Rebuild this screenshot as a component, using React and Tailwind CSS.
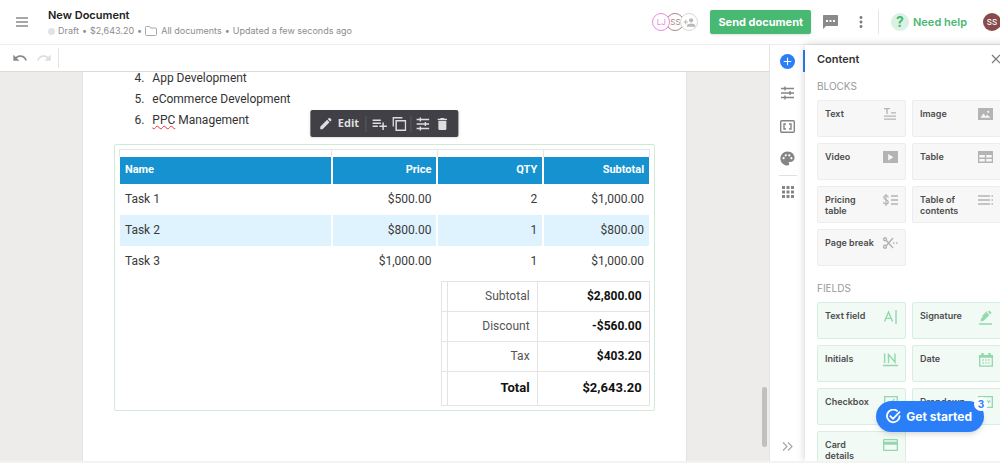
import {
  MdAdd,
  MdDelete,
  MdEdit,
  MdMoreVert,
  MdPalette,
  MdPersonAdd,
  MdPlaylistAdd,
  MdRedo,
  MdUndo,
} from 'react-icons/md'

const services = [
  { id: 4, name: 'App Development' },
  { id: 5, name: 'eCommerce Development' },
  { id: 6, name: 'PPC Management', typo: 'PPC' },
]

const tasks = [
  { name: 'Task 1', price: '$500.00', qty: 2, subtotal: '$1,000.00' },
  { name: 'Task 2', price: '$800.00', qty: 1, subtotal: '$800.00' },
  { name: 'Task 3', price: '$1,000.00', qty: 1, subtotal: '$1,000.00' },
]

const totals = [
  { label: 'Subtotal', value: '$2,800.00' },
  { label: 'Discount', value: '-$560.00' },
  { label: 'Tax', value: '$403.20' },
]

function TextIcon() {
  return (
    <svg width="15" height="12" viewBox="0 0 15 12" fill="currentColor">
      <path d="M1 0h6v1.3H4.7V6H3.3V1.3H1zM8 4.2h5v1.3H8zM1 7.5h12v1.3H1zM1 10.5h12v1.3H1z" />
    </svg>
  )
}

function VideoIcon() {
  return (
    <svg width="15" height="12" viewBox="0 0 15 12">
      <rect width="15" height="12" fill="currentColor" />
      <path d="M5.2 3v6.4L10.4 6.2z" fill="#f7f7f7" />
    </svg>
  )
}

function ImageIcon() {
  return (
    <svg width="15" height="12" viewBox="0 0 15 12">
      <rect width="15" height="12" fill="currentColor" />
      <path d="M2.5 9.8l3-4.2 2.2 2.8 1.4-1.6 3.4 3z" fill="#f7f7f7" />
      <circle cx="10.2" cy="3.8" r="1.1" fill="#f7f7f7" />
    </svg>
  )
}

function TableIcon() {
  return (
    <svg width="15" height="12" viewBox="0 0 15 12">
      <rect width="15" height="12" fill="currentColor" />
      <path d="M1.3 4h5.5v2.6H1.3zM8.2 4h5.5v2.6H8.2zM1.3 8h5.5v2.6H1.3zM8.2 8h5.5v2.6H8.2z" fill="#f7f7f7" />
    </svg>
  )
}

function PricingIcon() {
  return (
    <svg width="15" height="12" viewBox="0 0 15 12" fill="none" stroke="currentColor" strokeWidth="1.2">
      <path d="M5.2 3.4C5.2 2.3 4.3 1.7 3 1.7S.8 2.3.8 3.6s.9 1.7 2.200 2.100 2.200.9 2.200 2.200-.9 2-2.200 2S.6 9.200.6 8M3 0v12" />
      <path d="M8 2h7M8 6h7M8 10h7" strokeWidth="1.6" />
    </svg>
  )
}

function ContentsIcon() {
  return (
    <svg width="15" height="12" viewBox="0 0 15 12" fill="none" stroke="currentColor" strokeWidth="1.6">
      <path d="M0 2h12M0 6h12M0 10h12M13.4 2h1.6M13.4 6h1.6M13.4 10h1.6" />
    </svg>
  )
}

function ScissorsIcon() {
  return (
    <svg width="15" height="12" viewBox="0 0 15 12" fill="none" stroke="currentColor" strokeWidth="1.4">
      <circle cx="2" cy="2.2" r="1.5" />
      <circle cx="2" cy="9.8" r="1.5" />
      <path d="M3.2 3.2L10 11M3.2 8.8L10 1M10 6h1.5M13 6h1.5" />
    </svg>
  )
}

function TextFieldIcon() {
  return (
    <svg width="15" height="14" viewBox="0 0 15 14" fill="none" stroke="currentColor" strokeWidth="1.4">
      <path d="M1.5 11.5L5.5 2l4 9.5M3 8.4h5M13 0v14" />
    </svg>
  )
}

function SignatureIcon() {
  return (
    <svg width="15" height="15" viewBox="0 0 15 15" fill="currentColor">
      <path d="M2.5 11.5l.7-3L9 2.7l2.4 2.3-5.8 5.8zM9.8 1.9L11.2.5l2.4 2.3-1.4 1.4zM4 6l4.6-4.8.8.7L4.8 6.7zM1 13.3h13v1.4H1z" />
    </svg>
  )
}

function InitialsIcon() {
  return (
    <svg width="15" height="14" viewBox="0 0 15 14" fill="none" stroke="currentColor" strokeWidth="1.4">
      <path d="M1.6.5v9.5M5.5 10V1.5l6.5 7.5V.5M0 12.5h15" />
    </svg>
  )
}

function DateIcon() {
  return (
    <svg width="14" height="14" viewBox="0 0 14 14" fill="none" stroke="currentColor" strokeWidth="1.3">
      <path d="M.7 2.7h12.6v10.5H.7z" />
      <path d="M0 3.5h14M3.5 0v3M10.5 0v3" strokeWidth="2.4" />
      <path d="M3.5 7h7M3.5 9.8h7" strokeDasharray="1.4 1.4" />
    </svg>
  )
}

function CheckboxIcon() {
  return (
    <svg width="14" height="12" viewBox="0 0 14 12" fill="none" stroke="currentColor" strokeWidth="1.3">
      <path d="M.7.7h12.6v10.6H.7zM3.5 6l2.5 2.5L10.5 3" />
    </svg>
  )
}

function DropdownIcon() {
  return (
    <svg width="15" height="12" viewBox="0 0 15 12" fill="none" stroke="currentColor" strokeWidth="1.3">
      <path d="M.7.7h13.6v10.6H.7zM9 4.5l1.5 2 1.5-2" />
    </svg>
  )
}

function CardIcon() {
  return (
    <svg width="15" height="12" viewBox="0 0 15 12" fill="currentColor">
      <path fillRule="evenodd" d="M1 0h13a1 1 0 0 1 1 1v10a1 1 0 0 1-1 1H1a1 1 0 0 1-1-1V1a1 1 0 0 1 1-1zM1.3 1.3v1.4h12.4V1.3zM1.3 5.7v5h12.4v-5z" />
    </svg>
  )
}

function SlidersIcon() {
  return (
    <svg width="13" height="14" viewBox="0 0 13 14" fill="none" stroke="currentColor" strokeWidth="1.4">
      <path d="M0 2.5h13M0 7h13M0 11.5h13M4 .5v4M9 5v4M4 9.5v4" />
    </svg>
  )
}

function CopyIcon() {
  return (
    <svg width="14" height="14" viewBox="0 0 14 14" fill="none" stroke="currentColor" strokeWidth="1.5">
      <path d="M.8 9.5V.8h9.2M3.8 3.8h9.4v9.4H3.8z" />
    </svg>
  )
}

function CommentIcon() {
  return (
    <svg width="15" height="14" viewBox="0 0 15 14">
      <path d="M0 .8A.8.8 0 0 1 .8 0h13.4a.8.8 0 0 1 .8.8v9.4a.8.8 0 0 1-.8.8H3l-3 3z" fill="currentColor" />
      <path d="M3 5h2v2H3zM6.5 5h2v2h-2zM10 5h2v2h-2z" fill="#fff" />
    </svg>
  )
}

function VariablesIcon() {
  return (
    <svg width="15" height="13" viewBox="0 0 15 13" fill="none" stroke="currentColor" strokeWidth="1.4">
      <rect x=".7" y=".7" width="13.6" height="11.6" rx="1" />
      <path d="M6 4H4v5h2M9 4h2v5H9" />
    </svg>
  )
}

function GridIcon() {
  return (
    <svg width="12" height="12" viewBox="0 0 12 12" fill="none" stroke="currentColor" strokeWidth="3">
      <path d="M0 1.5h12M0 6h12M0 10.5h12" strokeDasharray="3 1.5" />
    </svg>
  )
}

function CheckCircleIcon() {
  return (
    <svg width="15" height="15" viewBox="0 0 15 15" fill="none" stroke="currentColor" strokeWidth="1.8">
      <path d="M11.6 2.3A6.3 6.3 0 1 0 13.6 6.5M3.8 6.6l3.2 3.2L14 2.6" />
    </svg>
  )
}

const blocks = [
  { label: 'Text', icon: TextIcon },
  { label: 'Image', icon: ImageIcon },
  { label: 'Video', icon: VideoIcon },
  { label: 'Table', icon: TableIcon },
  { label: 'Pricing table', icon: PricingIcon },
  { label: 'Table of contents', icon: ContentsIcon },
  { label: 'Page break', icon: ScissorsIcon },
]

const fields = [
  { label: 'Text field', icon: TextFieldIcon },
  { label: 'Signature', icon: SignatureIcon },
  { label: 'Initials', icon: InitialsIcon },
  { label: 'Date', icon: DateIcon },
  { label: 'Checkbox', icon: CheckboxIcon },
  { label: 'Dropdown', icon: DropdownIcon },
  { label: 'Card details', icon: CardIcon },
]

function Header() {
  return (
    <header className="flex h-[45px] flex-none items-center border-b border-[#ececec] bg-white pr-3 pl-4">
      <button aria-label="Menu" className="mr-5 text-[#8a8a8a]">
        <svg width="12" height="10" viewBox="0 0 12 10" fill="none" stroke="currentColor" strokeWidth="1.4">
          <path d="M0 1h12M0 5h12M0 9h12" />
        </svg>
      </button>
      <div className="flex-1 pt-[2px]">
        <h1 className="text-[11px] leading-4 font-semibold text-[#222]">New Document</h1>
        <div className="flex items-center gap-[3px] text-[9px] leading-4 text-[#8c8c8c]">
          <span className="size-[7px] rounded-full bg-[#e4e2e2]" />
          <span>Draft</span>
          <span>•</span>
          <span>$2,643.20</span>
          <span>•</span>
          <a href="#documents" className="flex items-center gap-1">
            <svg width="12" height="10" viewBox="0 0 12 10" fill="none" stroke="#a8a8a8">
              <path d="M1.5.5h3l1 1.5h5a1 1 0 0 1 1 1v5.5a1 1 0 0 1-1 1h-9a1 1 0 0 1-1-1v-7a1 1 0 0 1 1-1z" />
            </svg>
            All documents
          </a>
          <span>•</span>
          <span>Updated a few seconds ago</span>
        </div>
      </div>
      <div className="mr-3 flex -space-x-1 text-[8px]">
        <span className="z-10 flex size-[18px] items-center justify-center rounded-full border border-[#ee8ade] bg-white text-[#ee8ade]">LJ</span>
        <span className="flex size-[18px] items-center justify-center rounded-full border border-[#a98686] bg-white text-[#a98686]">SS</span>
        <button aria-label="Add recipient" className="flex size-[18px] items-center justify-center rounded-full border border-[#d8d8d8] bg-white text-[#b9b9b9]">
          <MdPersonAdd size={13} />
        </button>
      </div>
      <button className="h-6 rounded-xs bg-[#47b972] px-2 text-[11px] font-bold text-white shadow-sm">Send document</button>
      <button aria-label="Comments" className="ml-3 text-[#8a8a8a]">
        <CommentIcon />
      </button>
      <button aria-label="More" className="ml-[14px] text-[#808080]">
        <MdMoreVert size={18} />
      </button>
      <span className="mr-3 ml-2 h-6 w-px bg-[#e6e6e6]" />
      <button className="flex items-center gap-1 text-[11px] font-semibold text-[#47b972]">
        <span className="flex size-[18px] items-center justify-center rounded-full bg-[#daf1e3] text-sm font-bold">?</span>
        Need help
      </button>
      <span className="ml-4 flex size-[18px] items-center justify-center rounded-full bg-[#874b4e] text-[8px] font-medium text-white">SS</span>
    </header>
  )
}

function BlockToolbar() {
  return (
    <div className="absolute bottom-full left-1/2 mb-2 flex h-[27px] -translate-x-1/2 items-center rounded-xs bg-[#414047] px-2 text-[#dedede] shadow">
      <button className="mr-[6px] flex items-center gap-1 font-['Open_Sans',sans-serif] text-[11px] font-bold">
        <MdEdit size={15} />
        Edit
      </button>
      <span className="h-4 w-px bg-[#5b5a60]" />
      <button aria-label="Add row" className="mx-1">
        <MdPlaylistAdd size={18} />
      </button>
      <button aria-label="Duplicate" className="mr-1">
        <CopyIcon />
      </button>
      <span className="h-4 w-px bg-[#5b5a60]" />
      <button aria-label="Settings" className="mx-[5px]">
        <SlidersIcon />
      </button>
      <button aria-label="Delete">
        <MdDelete size={16} />
      </button>
    </div>
  )
}

function PricingTable() {
  return (
    <section className="relative rounded-xs border border-[#cfebd8] p-1">
      <BlockToolbar />
      <table className="w-full table-fixed text-[12px] text-[#3a3a3a]">
        <colgroup>
          <col className="w-2/5" />
          <col className="w-1/5" />
          <col className="w-1/5" />
          <col className="w-1/5" />
        </colgroup>
        <thead>
          <tr className="h-[7px]">
            <td className="border border-b-0 border-[#e6e6e6]" />
            <td className="border border-b-0 border-[#e6e6e6]" />
            <td className="border border-b-0 border-[#e6e6e6]" />
            <td className="border border-b-0 border-[#e6e6e6]" />
          </tr>
          <tr className="h-[27px] bg-[#1592cf] text-[11px] text-white">
            <th className="border-r-2 border-white px-[5px] text-left font-bold">Name</th>
            <th className="border-r-2 border-white px-[5px] text-right font-bold">Price</th>
            <th className="border-r-2 border-white px-[5px] text-right font-bold">QTY</th>
            <th className="px-[5px] text-right font-bold">Subtotal</th>
          </tr>
        </thead>
        <tbody>
          {tasks.map((task) => (
            <tr key={task.name} className="h-[31px] even:bg-[#def3fe]">
              <td className="border-r-2 border-white px-[5px]">{task.name}</td>
              <td className="border-r-2 border-white px-[5px] text-right">{task.price}</td>
              <td className="border-r-2 border-white px-[5px] text-right">{task.qty}</td>
              <td className="px-[5px] text-right">{task.subtotal}</td>
            </tr>
          ))}
        </tbody>
      </table>
      <table className="mt-1 ml-auto w-[209px] table-fixed text-right text-[12px]">
        <colgroup>
          <col className="w-[6px]" />
          <col className="w-[90px]" />
          <col />
        </colgroup>
        <tbody>
          {totals.map((row) => (
            <tr key={row.label} className="h-[30px]">
              <td className="border border-[#e4e4e4]" />
              <th className="border border-[#e4e4e4] px-[7px] text-right font-normal text-[#555]">{row.label}</th>
              <td className="border border-[#e4e4e4] px-[7px] font-bold text-[#111]">{row.value}</td>
            </tr>
          ))}
          <tr className="h-[34px] text-[13px] font-bold text-[#111]">
            <td className="border border-[#e4e4e4]" />
            <th className="border border-[#e4e4e4] px-[7px] text-right">Total</th>
            <td className="border border-[#e4e4e4] px-[7px]">$2,643.20</td>
          </tr>
        </tbody>
      </table>
    </section>
  )
}

function Editor() {
  return (
    <main className="flex min-w-0 flex-1 flex-col">
      <div className="flex h-[27px] flex-none items-center border-b border-[#dcdcdc] bg-white pl-3">
        <button aria-label="Undo" className="text-[#8a8a8a]">
          <MdUndo size={16} />
        </button>
        <button aria-label="Redo" className="mr-[6px] ml-2 text-[#dedede]">
          <MdRedo size={16} />
        </button>
        <span className="h-5 w-px bg-[#e4e4e4]" />
      </div>
      <div className="relative min-h-0 flex-1 overflow-hidden bg-[#edecea]">
        <div className="mx-auto h-full w-11/14 border-x border-[#e3e2e0] bg-white px-[31px] font-['Roboto',sans-serif]">
          <ol className="mb-[18px] space-y-[9px] pl-5 text-[12px] leading-3 text-[#333]">
            {services.map((service) => (
              <li key={service.id} className="flex gap-2">
                <span>{service.id}.</span>
                {service.typo ? (
                  <span>
                    <span className="underline decoration-red-500 decoration-wavy decoration-1">{service.typo}</span>
                    {service.name.slice(service.typo.length)}
                  </span>
                ) : (
                  <span>{service.name}</span>
                )}
              </li>
            ))}
          </ol>
          <PricingTable />
        </div>
        <div className="absolute right-[2px] bottom-[14px] h-[60px] w-[5px] rounded-full bg-[#c1c0bf]" />
      </div>
    </main>
  )
}

function Rail() {
  return (
    <nav className="flex w-9 flex-none flex-col items-center border-l border-[#e4e4e4] bg-white text-[#858585]">
      <button aria-label="Content" className="mt-[5px] flex h-[22px] w-full items-center justify-center border-x-2 border-l-transparent border-r-[#2a7ff9]">
        <span className="rounded-full bg-[#2a7ff9] p-px text-white">
          <MdAdd size={13} />
        </span>
      </button>
      <button aria-label="Settings" className="mt-[14px]">
        <SlidersIcon />
      </button>
      <button aria-label="Variables" className="mt-5">
        <VariablesIcon />
      </button>
      <button aria-label="Design" className="mt-[17px]">
        <MdPalette size={17} />
      </button>
      <span className="mt-2 h-px w-[18px] bg-[#e0e0e0]" />
      <button aria-label="Apps" className="mt-[10px]">
        <GridIcon />
      </button>
      <button aria-label="Collapse" className="mt-auto mb-[10px]">
        <svg width="11" height="9" viewBox="0 0 11 9" fill="none" stroke="#a5a5a5" strokeWidth="1.2">
          <path d="M1 .5l4 4-4 4M6 .5l4 4-4 4" />
        </svg>
      </button>
    </nav>
  )
}

function Tile({ label, icon: Icon, green }) {
  const colors = green ? 'border-[#d6f0df] bg-[#f1faf5]' : 'border-[#ededed] bg-[#f7f7f7]'
  return (
    <button className={`flex h-[37px] items-start justify-between rounded-xs border px-[7px] pt-[7px] text-left ${colors}`}>
      <span className="w-[52px] text-[9px] leading-[11px] font-semibold text-[#4d4d4d]">{label}</span>
      <span className={`flex-none ${green ? 'text-[#93d8ac]' : 'text-[#b4b4b4]'}`}>
        <Icon />
      </span>
    </button>
  )
}

function ContentPanel() {
  return (
    <aside className="z-10 w-52 flex-none overflow-hidden bg-white px-3 shadow-[0_0_8px_rgba(0,0,0,0.2)]">
      <div className="flex h-7 items-center justify-between">
        <h2 className="text-[11px] font-semibold text-[#333]">Content</h2>
        <button aria-label="Close">
          <svg width="10" height="10" viewBox="0 0 10 10" stroke="#777" strokeWidth="1.2">
            <path d="M1 1l8 8M9 1L1 9" />
          </svg>
        </button>
      </div>
      <h3 className="mt-1 mb-[5px] py-px text-[10px] leading-4 text-[#999]">BLOCKS</h3>
      <div className="grid grid-cols-2 gap-[6px]">
        {blocks.map((block) => (
          <Tile key={block.label} {...block} />
        ))}
      </div>
      <h3 className="mt-[13px] mb-[5px] py-px text-[10px] leading-4 text-[#999]">FIELDS</h3>
      <div className="grid grid-cols-2 gap-[6px]">
        {fields.map((field) => (
          <Tile key={field.label} {...field} green />
        ))}
      </div>
    </aside>
  )
}

export default function App() {
  return (
    <div className="relative h-screen overflow-hidden border-b-2 border-[#f3f3f3] font-['Inter',sans-serif]">
      <div className="flex h-full min-w-[1013px] flex-col">
        <Header />
        <div className="flex min-h-0 flex-1">
          <Editor />
          <Rail />
          <ContentPanel />
        </div>
      </div>
      <button className="absolute right-4 bottom-[29px] z-20 flex h-[31px] items-center gap-[5px] rounded-full bg-[#2a7ff9] pr-3 pl-[10px] text-[12px] font-bold text-white shadow-md">
        <CheckCircleIcon />
        Get started
        <span className="absolute -top-1 -right-1 flex size-[14px] items-center justify-center rounded-full bg-white text-[10px] font-bold text-[#2a7ff9]">3</span>
      </button>
    </div>
  )
}
